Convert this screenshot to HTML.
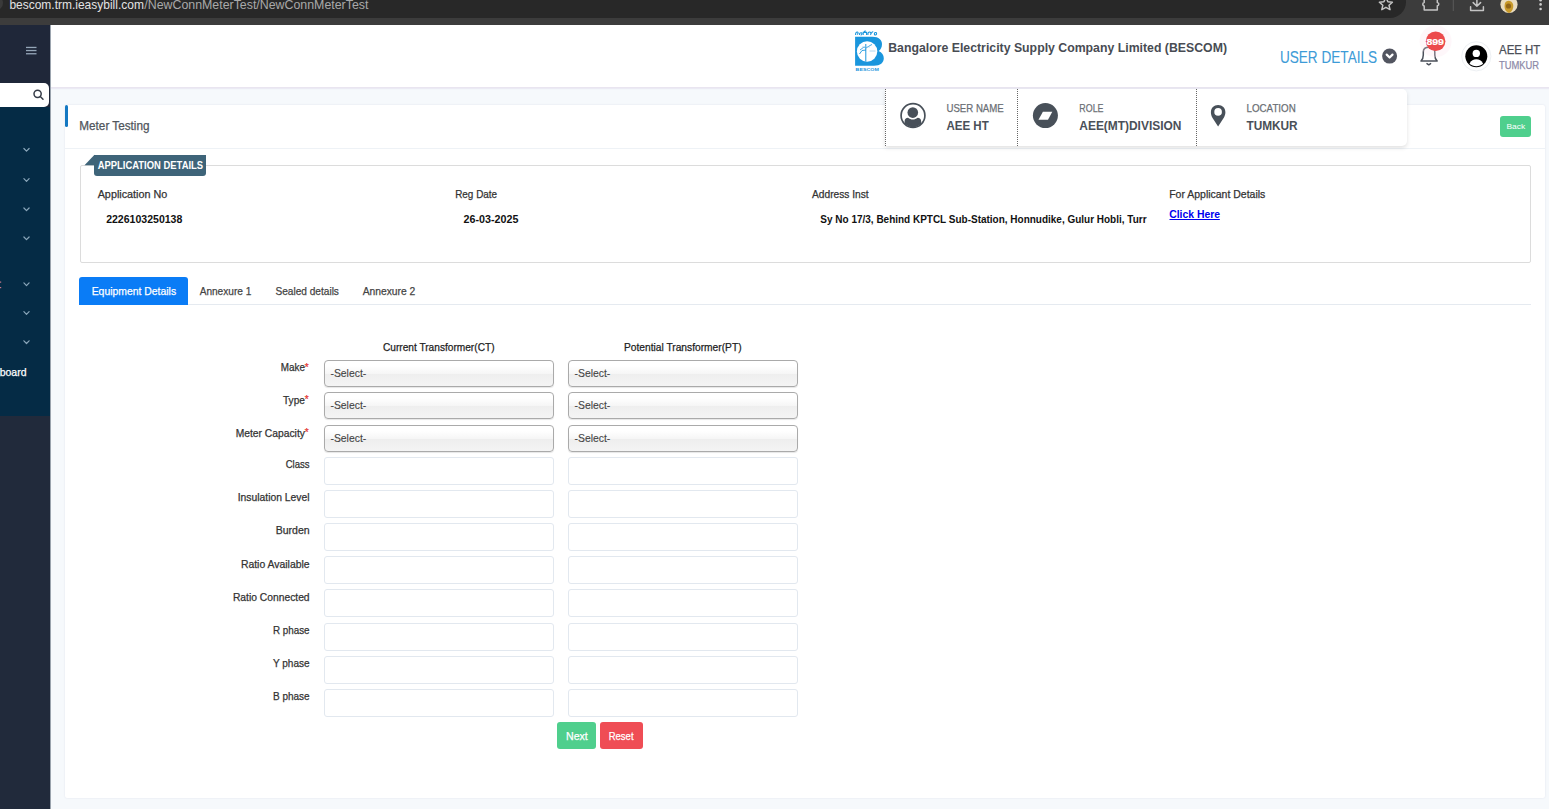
<!DOCTYPE html>
<html>
<head>
<meta charset="utf-8">
<title>Meter Testing - BESCOM</title>
<style>
*{box-sizing:border-box;margin:0;padding:0}
html,body{width:1549px;height:809px;overflow:hidden}
body{position:relative;background:#f6f9fc;font-family:"Liberation Sans",sans-serif}
.abs{position:absolute}
#chrome{left:0;top:0;width:1549px;height:25px;background:#3c3c3c}
#urlpill{left:-20px;top:-14px;width:1426px;height:32px;background:#282828;border-radius:16px}
#sidebar{left:0;top:25px;width:50px;height:784px;background:#212a3b}
#sb-top{left:0;top:25px;width:50px;height:82px;background:#1f2739}
#sb-mid{left:0;top:107px;width:50px;height:309px;background:#052b45}
#sb-edge{left:50px;top:25px;width:1px;height:784px;background:#9aa3ad}
#search{left:-6px;top:83px;width:55px;height:24px;background:#fff;border-radius:5px}
#header{left:51px;top:25px;width:1498px;height:63px;background:#fff;border-bottom:1px solid #e9e5f0;box-shadow:0 1px 1px rgba(215,205,230,.35)}
#card{left:65px;top:105px;width:1480px;height:693px;background:#fff;border-radius:2px;box-shadow:0 0 2px rgba(60,60,120,.12)}
#card-hd{left:65px;top:148px;width:1480px;height:1px;background:#eef2f6}
#accent{left:65px;top:104.7px;width:3px;height:22.5px;background:#1478c2;border-radius:2px}
#fieldset{left:80px;top:165px;width:1451px;height:98px;border:1px solid #dcdcdc;border-radius:2px}
#legend{left:94px;top:155px;width:112px;height:21px;background:#3e6479;border-radius:0 0 3px 3px}
#tabline{left:79px;top:304px;width:1452px;height:1px;background:#e5eaf0}
#tab-active{left:79px;top:277px;width:109px;height:28px;background:#0a7cf6;border-radius:3px 3px 0 0}
.sel{position:absolute;height:27px;border:1px solid #aaa;border-radius:4px;background:linear-gradient(#fff 20%,#f6f6f6 50%,#eee 52%,#f4f4f4 100%);box-shadow:0 1px 1px rgba(0,0,0,.1)}
.inp{position:absolute;height:28px;border:1px solid #e2e8ef;border-radius:3px;background:#fff}
.btn{position:absolute;border-radius:3px}
#ddbox{left:885px;top:88.7px;width:522px;height:57.3px;background:#fff;border-radius:0 5px 5px 0;box-shadow:0 2px 4px rgba(0,0,0,.12)}
.dot{position:absolute;top:89px;width:1px;height:57px;border-left:1px dotted #666}
svg.ov{position:absolute;left:0;top:0}
</style>
</head>
<body>
<div id="chrome" class="abs"></div>
<div id="urlpill" class="abs"></div>

<div id="sidebar" class="abs"></div>
<div id="sb-top" class="abs"></div>
<div id="sb-mid" class="abs"></div>
<div id="sb-edge" class="abs"></div>
<div id="search" class="abs"></div>

<div id="header" class="abs"></div>

<div id="card" class="abs"></div>
<div id="card-hd" class="abs"></div>
<div id="accent" class="abs"></div>
<div id="fieldset" class="abs"></div>
<div id="legend" class="abs"></div>
<div id="tabline" class="abs"></div>
<div id="tab-active" class="abs"></div>

<!-- selects -->
<div class="sel" style="left:324px;top:360px;width:230px"></div>
<div class="sel" style="left:568px;top:360px;width:230px"></div>
<div class="sel" style="left:324px;top:392px;width:230px"></div>
<div class="sel" style="left:568px;top:392px;width:230px"></div>
<div class="sel" style="left:324px;top:425px;width:230px"></div>
<div class="sel" style="left:568px;top:425px;width:230px"></div>
<!-- inputs -->
<div class="inp" style="left:324px;top:457px;width:230px"></div>
<div class="inp" style="left:568px;top:457px;width:230px"></div>
<div class="inp" style="left:324px;top:490px;width:230px"></div>
<div class="inp" style="left:568px;top:490px;width:230px"></div>
<div class="inp" style="left:324px;top:523px;width:230px"></div>
<div class="inp" style="left:568px;top:523px;width:230px"></div>
<div class="inp" style="left:324px;top:556px;width:230px"></div>
<div class="inp" style="left:568px;top:556px;width:230px"></div>
<div class="inp" style="left:324px;top:589px;width:230px"></div>
<div class="inp" style="left:568px;top:589px;width:230px"></div>
<div class="inp" style="left:324px;top:623px;width:230px"></div>
<div class="inp" style="left:568px;top:623px;width:230px"></div>
<div class="inp" style="left:324px;top:656px;width:230px"></div>
<div class="inp" style="left:568px;top:656px;width:230px"></div>
<div class="inp" style="left:324px;top:689px;width:230px"></div>
<div class="inp" style="left:568px;top:689px;width:230px"></div>

<div class="btn" style="left:557px;top:722px;width:39px;height:27px;background:#4fcf8d"></div>
<div class="btn" style="left:600px;top:722px;width:43px;height:27px;background:#ef4d55"></div>
<div class="btn" style="left:1500px;top:116px;width:31px;height:21px;background:#4fcf8d"></div>

<div id="ddbox" class="abs"></div>
<div class="dot" style="left:885px"></div>
<div class="dot" style="left:1017px"></div>
<div class="dot" style="left:1196px"></div>

<svg class="ov" width="1549" height="809" viewBox="0 0 1549 809" font-family="Liberation Sans, sans-serif">
<!-- chrome icons -->
<g fill="none" stroke="#c4c4c4" stroke-width="1.5" stroke-linejoin="round" stroke-linecap="round">
<path d="M1385.9,-2.8 L1387.9,1.8 L1392.4,2.2 L1389,5.3 L1390,9.6 L1385.9,7.3 L1381.8,9.6 L1382.8,5.3 L1379.4,2.2 L1383.9,1.8 Z"/>
<path d="M1424.2,-2 V2.6 C1422.3,2.9 1422.3,5.6 1424.2,5.9 V10 H1437.3 V5.8 C1439.3,5.6 1439.3,2.6 1437.3,2.4 V-2"/>
<path d="M1476.9,-2 V6.2 M1473.2,2.6 L1476.9,6.3 L1480.6,2.6 M1470.6,6.8 V10.6 H1483.4 V6.8"/>
</g>
<rect x="1452.8" y="-1" width="1" height="12" fill="#5a5a5a"/>
<circle cx="1509" cy="4.5" r="8.6" fill="#e9dcc0"/>
<path d="M1505,3 C1507,0 1511,0 1513,4 C1514,8 1512,12 1509,13 C1506,12 1503.5,9 1505,3 Z" fill="#c99a2a"/>
<circle cx="1508.5" cy="6" r="2.6" fill="#7a4f10" opacity="0.7"/>
<g fill="#cfcfcf"><circle cx="1540.6" cy="0.2" r="1.3"/><circle cx="1540.6" cy="4.4" r="1.3"/><circle cx="1540.6" cy="9" r="1.3"/></g>
<circle cx="-4" cy="3" r="7" fill="#3a3a3a"/>

<!-- sidebar -->
<g fill="#95a6b8"><rect x="26" y="46.8" width="10.5" height="1.3"/><rect x="26" y="49.9" width="10.5" height="1.3"/><rect x="26" y="53.1" width="10.5" height="1.3"/></g>
<g fill="none" stroke="#363c48" stroke-width="1.5" stroke-linecap="round"><circle cx="37.6" cy="93.8" r="3.6"/><path d="M40.3,96.5 L43,99.2"/></g>
<g fill="none" stroke="#8aa6ba" stroke-width="1.2" stroke-linecap="round" stroke-linejoin="round">
<path d="M23.9,148.5 L26.5,151.2 L29.1,148.5"/>
<path d="M23.9,178.7 L26.5,181.4 L29.1,178.7"/>
<path d="M23.9,208 L26.5,210.7 L29.1,208"/>
<path d="M23.9,237 L26.5,239.7 L29.1,237"/>
<path d="M23.9,282.9 L26.5,285.6 L29.1,282.9"/>
<path d="M23.9,311.6 L26.5,314.3 L29.1,311.6"/>
<path d="M23.9,340.8 L26.5,343.5 L29.1,340.8"/>
</g>
<g fill="#c97a8a"><rect x="0" y="281.5" width="1.2" height="1.2"/><rect x="0" y="287" width="1.2" height="1.2"/></g>

<!-- logo -->
<g fill="#1a96dd">
<path d="M855.1,36.7 H872.5 C879,36.7 882,40 882,44 C882,47.5 880.6,49.8 878.6,51 C882,52.4 883.8,55 883.8,58.2 C883.8,62.6 880.4,65.7 874,65.7 H855.1 Z"/>
<path d="M855.6,35 C855.4,33 856.2,31.8 857.4,32 C858.5,32.3 858.2,34 857,34.4 M859.5,35 C859.2,33.2 860.4,32.4 861.4,32.8 C862.4,33.4 861.8,35 860.6,35 M863.2,35 V32.4 H866.6 V35 M864.2,32.4 C864,31.3 865,30.8 865.8,31.2 M868,35 C867.6,33 868.6,31.8 869.8,32 C871,32.3 871.2,33.6 870.5,35 M871.4,33.5 C871.5,32.2 872.5,31.6 873.2,32 M874.4,34 C874.2,32.8 875.2,32.3 876,32.6 C876.9,33 876.8,34.8 875.6,35 C874.8,35.1 874.4,34.6 874.4,34" fill="none" stroke="#1a96dd" stroke-width="1.1"/>
<text x="855.6" y="70.9" font-size="4.4" font-weight="bold" textLength="23.2" lengthAdjust="spacingAndGlyphs" fill="#1a96dd">BESCOM</text>
</g>
<circle cx="867.1" cy="51.5" r="10.2" fill="#ffffff"/>
<g stroke="#1a96dd" fill="none" stroke-width="1">
<path d="M865.8,44 V61.5"/>
<path d="M860,50 L864,47 L866,48 L870,45.5 L872,44.5" stroke-width="0.8"/>
<path d="M859.5,54 L862,50.5 L866,50" stroke-width="0.9"/>
<path d="M869.5,51 H875.5" stroke="#9ccbe8" stroke-width="0.8"/>
<path d="M862,47 H870" stroke="#9ccbe8" stroke-width="0.6"/>
</g>

<!-- header right -->
<circle cx="1389.6" cy="56.1" r="7.5" fill="#525560"/>
<path d="M1386.7,54.6 L1389.6,57.5 L1392.5,54.6" fill="none" stroke="#fff" stroke-width="2.2" stroke-linecap="round" stroke-linejoin="round"/>
<g fill="none" stroke="#4b505a" stroke-width="1.5" stroke-linejoin="round" stroke-linecap="round">
<path d="M1421,61 H1437.2 C1435.5,59.5 1434.8,57.5 1434.8,55 V52 C1434.8,49 1432.5,47.3 1429,47.3 C1425.5,47.3 1423.3,49 1423.3,52 V55 C1423.3,57.5 1422.6,59.5 1421,61 Z"/>
<path d="M1427,63.6 L1428.8,64.8 L1430.6,63.6"/>
</g>
<circle cx="1435.6" cy="41.3" r="16" fill="#fbe4ee" opacity="0.28"/>
<circle cx="1435.6" cy="41.3" r="9.8" fill="#ec4a4c"/>
<text x="1426.4" y="44.8" font-size="9.6" font-weight="bold" fill="#ffffff" stroke="#ffffff" stroke-width="0.2" textLength="17.6" lengthAdjust="spacingAndGlyphs">899</text>
<circle cx="1476.3" cy="56.3" r="14.6" fill="#fff" stroke="#eef1f4" stroke-width="1"/>
<circle cx="1476.3" cy="56.3" r="11" fill="#000"/>
<circle cx="1476.3" cy="53.4" r="3.7" fill="#fff"/>
<path d="M1469.5,63.7 C1471,60.3 1473.5,59.2 1476.3,59.2 C1479.1,59.2 1481.6,60.3 1483.1,63.7 C1481.3,65.3 1479,66.2 1476.3,66.2 C1473.6,66.2 1471.3,65.3 1469.5,63.7 Z" fill="#fff"/>

<!-- dropdown icons -->
<circle cx="913" cy="115.6" r="11.9" fill="none" stroke="#485059" stroke-width="1.7"/>
<circle cx="912.8" cy="112.6" r="5.3" fill="#485059"/>
<clipPath id="uc"><circle cx="913" cy="115.6" r="11.5"/></clipPath>
<path clip-path="url(#uc)" d="M904.6,130 V121.5 C904.6,119 906,117.8 908,117.8 C909.5,119 911,119.6 912.8,119.6 C914.6,119.6 916.1,119 917.6,117.8 C919.6,117.8 921.2,119 921.2,121.5 V130 Z" fill="#485059"/>
<circle cx="1045.4" cy="115.6" r="12.5" fill="#485059"/>
<path d="M1042.9,111.8 H1052.3 L1048,119.8 H1038.5 Z" fill="#fff"/>
<path d="M1218.1,105.1 C1222.3,105.1 1225.4,108.2 1225.4,112.2 C1225.4,114.2 1224.8,115.8 1223.8,117.8 L1218.1,126.5 L1212.4,117.8 C1211.4,115.8 1210.9,114.2 1210.9,112.2 C1210.9,108.2 1213.9,105.1 1218.1,105.1 Z M1218.1,108.1 A3.8,3.8 0 1 0 1218.1,115.7 A3.8,3.8 0 1 0 1218.1,108.1 Z" fill="#485059" fill-rule="evenodd"/>

<!-- card -->
<path d="M84.5,165.2 L94.5,154.8 V165.2 Z" fill="#3e6479"/>
<rect x="1169.5" y="219" width="50.3" height="1" fill="#0000ee"/>

<text x="9.40" y="8.80" font-size="13.33" fill="#e3e3e3" textLength="134.50" lengthAdjust="spacingAndGlyphs">bescom.trm.ieasybill.com</text>
<text x="144.30" y="8.80" font-size="13.33" fill="#a9a9a9" textLength="224.10" lengthAdjust="spacingAndGlyphs">/NewConnMeterTest/NewConnMeterTest</text>
<text x="-0.33" y="375.80" font-size="11.01" fill="#ffffff" stroke="#ffffff" stroke-width="0.25" textLength="26.86" lengthAdjust="spacingAndGlyphs">board</text>
<text x="888.22" y="52.20" font-size="12.75" fill="#484c53" font-weight="bold" textLength="338.77" lengthAdjust="spacingAndGlyphs">Bangalore Electricity Supply Company Limited (BESCOM)</text>
<text x="1279.88" y="62.50" font-size="17.39" fill="#3d9bd7" stroke="#3d9bd7" stroke-width="0.1" textLength="97.24" lengthAdjust="spacingAndGlyphs">USER DETAILS</text>
<text x="1499.03" y="54.00" font-size="12.46" fill="#4b4f58" stroke="#4b4f58" stroke-width="0.25" textLength="41.35" lengthAdjust="spacingAndGlyphs">AEE HT</text>
<text x="1499.08" y="69.00" font-size="10.72" fill="#8d8aa8" stroke="#8d8aa8" stroke-width="0.25" textLength="40.04" lengthAdjust="spacingAndGlyphs">TUMKUR</text>
<text x="946.47" y="111.70" font-size="11.16" fill="#6b6f75" stroke="#6b6f75" stroke-width="0.25" textLength="57.27" lengthAdjust="spacingAndGlyphs">USER NAME</text>
<text x="946.42" y="130.00" font-size="12.61" fill="#4a5058" font-weight="bold" textLength="42.36" lengthAdjust="spacingAndGlyphs">AEE HT</text>
<text x="1079.37" y="111.80" font-size="11.16" fill="#6b6f75" stroke="#6b6f75" stroke-width="0.25" textLength="24.17" lengthAdjust="spacingAndGlyphs">ROLE</text>
<text x="1079.32" y="130.00" font-size="12.61" fill="#4a5058" font-weight="bold" textLength="102.06" lengthAdjust="spacingAndGlyphs">AEE(MT)DIVISION</text>
<text x="1246.47" y="111.80" font-size="11.16" fill="#6b6f75" stroke="#6b6f75" stroke-width="0.25" textLength="49.27" lengthAdjust="spacingAndGlyphs">LOCATION</text>
<text x="1246.42" y="130.00" font-size="12.61" fill="#4a5058" font-weight="bold" textLength="51.26" lengthAdjust="spacingAndGlyphs">TUMKUR</text>
<text x="79.34" y="130.20" font-size="12.03" fill="#50555c" stroke="#50555c" stroke-width="0.25" textLength="70.12" lengthAdjust="spacingAndGlyphs">Meter Testing</text>
<text x="1506.46" y="129.20" font-size="8.12" fill="#ffffff" textLength="18.69" lengthAdjust="spacingAndGlyphs">Back</text>
<text x="97.69" y="168.90" font-size="10.43" fill="#ffffff" font-weight="bold" textLength="105.43" lengthAdjust="spacingAndGlyphs">APPLICATION DETAILS</text>
<text x="97.68" y="197.80" font-size="10.58" fill="#333333" stroke="#333333" stroke-width="0.25" textLength="69.63" lengthAdjust="spacingAndGlyphs">Application No</text>
<text x="455.18" y="197.80" font-size="10.58" fill="#333333" stroke="#333333" stroke-width="0.25" textLength="41.93" lengthAdjust="spacingAndGlyphs">Reg Date</text>
<text x="811.98" y="197.80" font-size="10.58" fill="#333333" stroke="#333333" stroke-width="0.25" textLength="56.73" lengthAdjust="spacingAndGlyphs">Address Inst</text>
<text x="1169.18" y="197.80" font-size="10.58" fill="#333333" stroke="#333333" stroke-width="0.25" textLength="96.13" lengthAdjust="spacingAndGlyphs">For Applicant Details</text>
<text x="106.17" y="223.30" font-size="11.01" fill="#111111" font-weight="bold" textLength="76.16" lengthAdjust="spacingAndGlyphs">2226103250138</text>
<text x="463.57" y="223.30" font-size="11.01" fill="#111111" font-weight="bold" textLength="54.86" lengthAdjust="spacingAndGlyphs">26-03-2025</text>
<text x="820.37" y="223.30" font-size="11.01" fill="#111111" font-weight="bold" textLength="326.16" lengthAdjust="spacingAndGlyphs">Sy No 17/3, Behind KPTCL Sub-Station, Honnudike, Gulur Hobli, Turr</text>
<text x="1169.18" y="218.00" font-size="10.72" fill="#0000ee" font-weight="bold" textLength="50.94" lengthAdjust="spacingAndGlyphs">Click Here</text>
<text x="91.65" y="295.20" font-size="11.59" fill="#ffffff" stroke="#ffffff" stroke-width="0.25" textLength="84.50" lengthAdjust="spacingAndGlyphs">Equipment Details</text>
<text x="199.65" y="295.20" font-size="11.59" fill="#444444" stroke="#444444" stroke-width="0.25" textLength="51.70" lengthAdjust="spacingAndGlyphs">Annexure 1</text>
<text x="275.45" y="295.20" font-size="11.59" fill="#444444" stroke="#444444" stroke-width="0.25" textLength="63.50" lengthAdjust="spacingAndGlyphs">Sealed details</text>
<text x="362.65" y="295.20" font-size="11.59" fill="#444444" stroke="#444444" stroke-width="0.25" textLength="52.70" lengthAdjust="spacingAndGlyphs">Annexure 2</text>
<text x="382.96" y="350.80" font-size="11.30" fill="#222222" stroke="#222222" stroke-width="0.25" textLength="111.58" lengthAdjust="spacingAndGlyphs">Current Transformer(CT)</text>
<text x="623.96" y="350.80" font-size="11.30" fill="#222222" stroke="#222222" stroke-width="0.25" textLength="117.58" lengthAdjust="spacingAndGlyphs">Potential Transformer(PT)</text>
<text x="280.68" y="371.30" font-size="10.58" fill="#333333" stroke="#333333" stroke-width="0.25" textLength="24.23" lengthAdjust="spacingAndGlyphs">Make</text>
<text x="304.70" y="371.00" font-size="10.00" fill="#e53935" stroke="#e53935" stroke-width="0.25">*</text>
<text x="282.98" y="403.60" font-size="10.58" fill="#333333" stroke="#333333" stroke-width="0.25" textLength="21.93" lengthAdjust="spacingAndGlyphs">Type</text>
<text x="304.70" y="403.30" font-size="10.00" fill="#e53935" stroke="#e53935" stroke-width="0.25">*</text>
<text x="235.68" y="436.50" font-size="10.58" fill="#333333" stroke="#333333" stroke-width="0.25" textLength="69.23" lengthAdjust="spacingAndGlyphs">Meter Capacity</text>
<text x="304.70" y="436.20" font-size="10.00" fill="#e53935" stroke="#e53935" stroke-width="0.25">*</text>
<text x="285.68" y="468.10" font-size="10.58" fill="#333333" stroke="#333333" stroke-width="0.25" textLength="23.93" lengthAdjust="spacingAndGlyphs">Class</text>
<text x="237.68" y="501.40" font-size="10.58" fill="#333333" stroke="#333333" stroke-width="0.25" textLength="71.93" lengthAdjust="spacingAndGlyphs">Insulation Level</text>
<text x="275.68" y="534.30" font-size="10.58" fill="#333333" stroke="#333333" stroke-width="0.25" textLength="33.93" lengthAdjust="spacingAndGlyphs">Burden</text>
<text x="240.88" y="568.10" font-size="10.58" fill="#333333" stroke="#333333" stroke-width="0.25" textLength="68.73" lengthAdjust="spacingAndGlyphs">Ratio Available</text>
<text x="232.88" y="600.60" font-size="10.58" fill="#333333" stroke="#333333" stroke-width="0.25" textLength="76.73" lengthAdjust="spacingAndGlyphs">Ratio Connected</text>
<text x="272.98" y="634.40" font-size="10.58" fill="#333333" stroke="#333333" stroke-width="0.25" textLength="36.63" lengthAdjust="spacingAndGlyphs">R phase</text>
<text x="272.98" y="667.30" font-size="10.58" fill="#333333" stroke="#333333" stroke-width="0.25" textLength="36.63" lengthAdjust="spacingAndGlyphs">Y phase</text>
<text x="272.98" y="700.40" font-size="10.58" fill="#333333" stroke="#333333" stroke-width="0.25" textLength="36.63" lengthAdjust="spacingAndGlyphs">B phase</text>
<text x="330.46" y="376.60" font-size="11.30" fill="#444444" stroke="#444444" stroke-width="0.12" textLength="35.78" lengthAdjust="spacingAndGlyphs">-Select-</text>
<text x="574.56" y="376.60" font-size="11.30" fill="#444444" stroke="#444444" stroke-width="0.12" textLength="35.78" lengthAdjust="spacingAndGlyphs">-Select-</text>
<text x="330.46" y="408.90" font-size="11.30" fill="#444444" stroke="#444444" stroke-width="0.12" textLength="35.78" lengthAdjust="spacingAndGlyphs">-Select-</text>
<text x="574.56" y="408.90" font-size="11.30" fill="#444444" stroke="#444444" stroke-width="0.12" textLength="35.78" lengthAdjust="spacingAndGlyphs">-Select-</text>
<text x="330.46" y="441.80" font-size="11.30" fill="#444444" stroke="#444444" stroke-width="0.12" textLength="35.78" lengthAdjust="spacingAndGlyphs">-Select-</text>
<text x="574.56" y="441.80" font-size="11.30" fill="#444444" stroke="#444444" stroke-width="0.12" textLength="35.78" lengthAdjust="spacingAndGlyphs">-Select-</text>
<text x="565.97" y="740.20" font-size="10.87" fill="#ffffff" stroke="#ffffff" stroke-width="0.25" textLength="21.85" lengthAdjust="spacingAndGlyphs">Next</text>
<text x="608.77" y="740.20" font-size="10.87" fill="#ffffff" stroke="#ffffff" stroke-width="0.25" textLength="24.75" lengthAdjust="spacingAndGlyphs">Reset</text>
</svg>
</body>
</html>
